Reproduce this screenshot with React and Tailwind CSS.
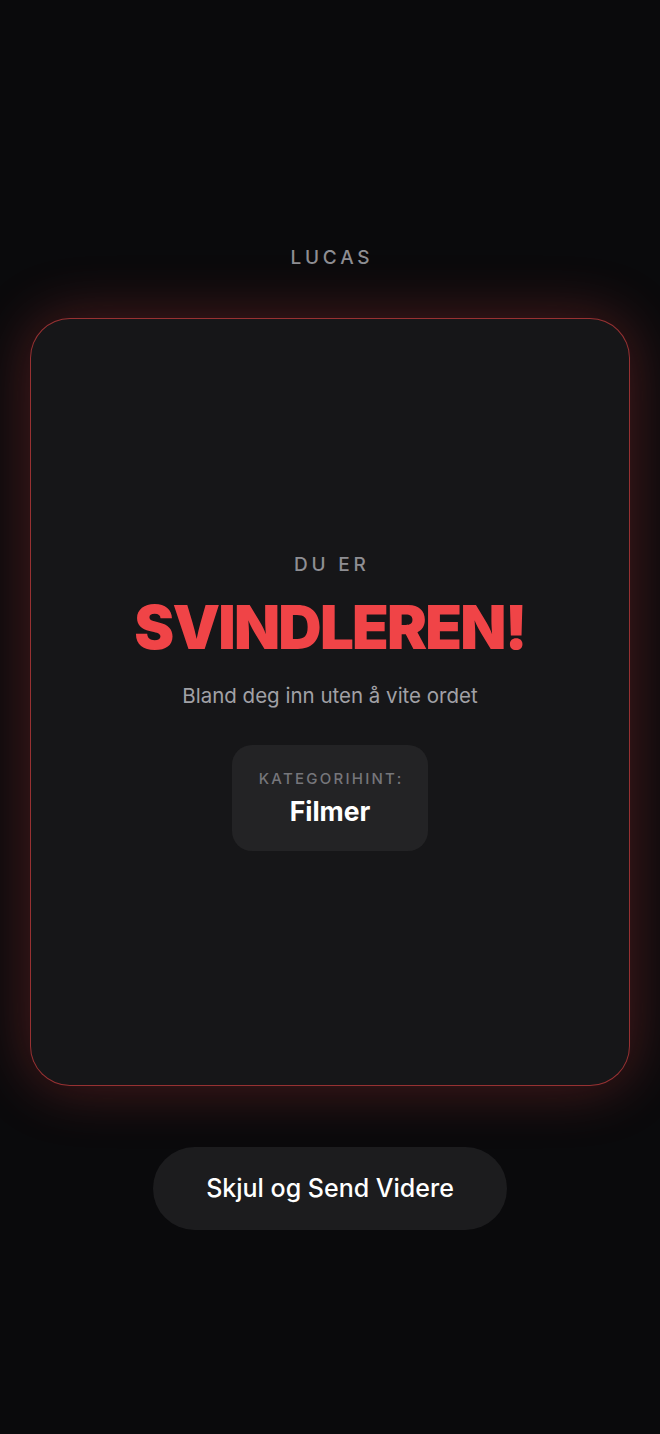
export default function App() {
  return (
    <div
      className="min-h-[1434px] w-full bg-[#0a0a0c] flex flex-col items-center"
      style={{ fontFamily: 'Inter, "Noto Sans", sans-serif' }}
    >
      <div className="pt-[246px] h-[270px] text-[19px] leading-[24px] font-medium tracking-[0.2em] text-[#8e8e93] pl-[0.2em]">
        LUCAS
      </div>
      <div className="mt-[48px] w-[600px] h-[768px] rounded-[40px] bg-[#161618] border border-[#ef4444]/60 shadow-[0_0_60px_rgba(239,68,68,0.3)] flex flex-col items-center justify-center">
        <div className="text-[19px] leading-[24px] font-medium tracking-[0.2em] text-[#8e8e93] pl-[0.2em]">
          DU ER
        </div>
        <div className="mt-[18px] text-[60px] leading-[64px] font-black tracking-[-0.03em] text-[#f04447]">
          SVINDLEREN!
        </div>
        <div className="mt-[23px] text-[20.5px] leading-[28px] text-[#a1a1a6]">
          Bland deg inn uten å vite ordet
        </div>
        <div className="mt-[35px] w-[196px] h-[106px] rounded-[20px] bg-[#232325] flex flex-col items-center justify-center">
          <div className="text-[15px] leading-[18px] font-medium tracking-[0.15em] text-[#76767b] pl-[0.15em]">
            KATEGORIHINT:
          </div>
          <div className="mt-[7px] text-[26.5px] leading-[32px] font-bold text-white">
            Filmer
          </div>
        </div>
      </div>
      <button className="mt-[61px] w-[354px] h-[83px] rounded-full bg-[#1c1c1e] text-white text-[25px] font-medium">
        Skjul og Send Videre
      </button>
    </div>
  );
}
